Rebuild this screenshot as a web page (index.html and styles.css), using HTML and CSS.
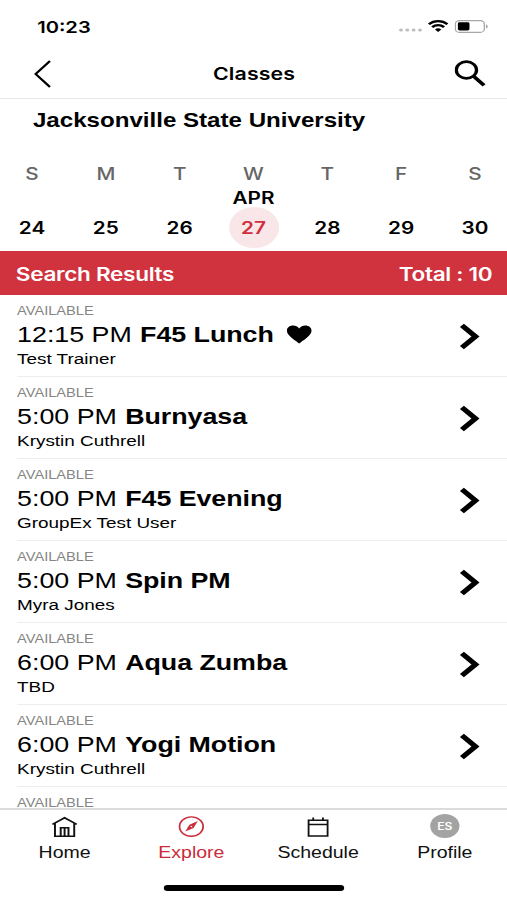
FILE: index.html
```html
<!DOCTYPE html>
<html lang="en">
<head>
<meta charset="utf-8">
<title>Classes</title>
<link rel="stylesheet" href="styles.css">
</head>
<body>
<div class="screen">
  <div class="status">
    <span class="clock">10:23</span>
    <div class="status-icons">
      <svg class="dots" width="20" height="4" viewBox="0 0 20 4" fill="#bdbdbd"><circle cx="2" cy="2" r="1.6"/><circle cx="7.2" cy="2" r="1.6"/><circle cx="12.4" cy="2" r="1.6"/><circle cx="17.6" cy="2" r="1.6"/></svg>
      <svg class="wifi" width="17" height="12" viewBox="0 0 17 12" fill="none" stroke="#000" stroke-width="2.3"><path d="M.9 4.3C5.2.1 11.8.1 16.1 4.3"/><path d="M3.6 7.1c2.8-2.7 7-2.7 9.8 0"/><path d="M8.5 12 5.9 9.4c1.4-1.4 3.8-1.4 5.2 0z" fill="#000" stroke="none"/></svg>
      <svg class="battery" width="28" height="13" viewBox="0 0 28 13"><rect x=".6" y=".6" width="23.8" height="11.8" rx="3.4" fill="none" stroke="#a6a6a6" stroke-width="1.1"/><rect x="2.7" y="2.3" width="9.5" height="8.2" rx="1.4"/><path d="M25.7 4.3c2 .8 2 3.6 0 4.4z" fill="#a6a6a6"/></svg>
    </div>
  </div>
  <header class="nav">
    <svg class="back" width="14" height="28" viewBox="0 0 14 28" fill="none" stroke="#000" stroke-width="1.9"><path d="M13 1 1.2 14 13 27"/></svg>
    <h1>Classes</h1>
    <svg class="search" width="26" height="27" viewBox="0 0 26 27" fill="none" stroke="#000"><circle cx="9.7" cy="10" r="8.3" stroke-width="2.7"/><path d="m15.5 16.2 8.7 9.2" stroke-width="3.3"/></svg>
  </header>
  <h2 class="place">Jacksonville State University</h2>
  <div class="week">
    <div class="day"><span class="dow">S</span><span class="month"></span><span class="date">24</span></div>
    <div class="day"><span class="dow">M</span><span class="month"></span><span class="date">25</span></div>
    <div class="day"><span class="dow">T</span><span class="month"></span><span class="date">26</span></div>
    <div class="day"><span class="dow">W</span><span class="month">APR</span><span class="date selected">27</span></div>
    <div class="day"><span class="dow">T</span><span class="month"></span><span class="date">28</span></div>
    <div class="day"><span class="dow">F</span><span class="month"></span><span class="date">29</span></div>
    <div class="day"><span class="dow">S</span><span class="month"></span><span class="date">30</span></div>
  </div>
  <div class="results"><span>Search Results</span><span class="total">Total : 10</span></div>
  <main class="list">
    <div class="row"><div class="info"><span class="tag">AVAILABLE</span><p class="name">12:15 PM <b>F45 Lunch</b><svg class="heart" width="21" height="19" viewBox="0 0 21 19"><path d="M10.5 18.5C8 16 .4 10.8.4 5.8.4 2.8 2.6.6 5.4.6c2.2 0 4 1.1 5.1 3 1.1-1.9 2.9-3 5.1-3 2.8 0 5 2.2 5 5.2 0 5-7.6 10.2-10.1 12.7z"/></svg></p><p class="trainer">Test Trainer</p></div><svg class="chevron" width="17" height="27" viewBox="0 0 17 27"><path d="m2 2.3 11.2 11.2L2 24.7"/></svg></div>
    <div class="row"><div class="info"><span class="tag">AVAILABLE</span><p class="name">5:00 PM <b>Burnyasa</b></p><p class="trainer">Krystin Cuthrell</p></div><svg class="chevron" width="17" height="27" viewBox="0 0 17 27"><path d="m2 2.3 11.2 11.2L2 24.7"/></svg></div>
    <div class="row"><div class="info"><span class="tag">AVAILABLE</span><p class="name">5:00 PM <b>F45 Evening</b></p><p class="trainer">GroupEx Test User</p></div><svg class="chevron" width="17" height="27" viewBox="0 0 17 27"><path d="m2 2.3 11.2 11.2L2 24.7"/></svg></div>
    <div class="row"><div class="info"><span class="tag">AVAILABLE</span><p class="name">5:00 PM <b>Spin PM</b></p><p class="trainer">Myra Jones</p></div><svg class="chevron" width="17" height="27" viewBox="0 0 17 27"><path d="m2 2.3 11.2 11.2L2 24.7"/></svg></div>
    <div class="row"><div class="info"><span class="tag">AVAILABLE</span><p class="name">6:00 PM <b>Aqua Zumba</b></p><p class="trainer">TBD</p></div><svg class="chevron" width="17" height="27" viewBox="0 0 17 27"><path d="m2 2.3 11.2 11.2L2 24.7"/></svg></div>
    <div class="row"><div class="info"><span class="tag">AVAILABLE</span><p class="name">6:00 PM <b>Yogi Motion</b></p><p class="trainer">Krystin Cuthrell</p></div><svg class="chevron" width="17" height="27" viewBox="0 0 17 27"><path d="m2 2.3 11.2 11.2L2 24.7"/></svg></div>
    <div class="row last"><div class="info"><span class="tag">AVAILABLE</span></div></div>
  </main>
  <nav class="tabs">
    <div class="tab"><svg width="22" height="22" viewBox="0 0 22 22" fill="none" stroke="#111" stroke-width="1.6"><path d="M1 8.4 11 1.8l10 6.6M3.1 7.4v12.8h15.8V7.4M7.8 20.2v-8.4h6.4v8.4M11 12v8"/></svg><span>Home</span></div>
    <div class="tab active"><svg width="22" height="22" viewBox="0 0 22 22" fill="none" stroke="#ca2c39" stroke-width="1.4"><circle cx="11" cy="10.6" r="9.7"/><path d="m6 15.4 3.4-6.6 6.9-3.7-3.5 6.9z" fill="#ca2c39" stroke="none"/><circle cx="11" cy="10.5" r=".8" fill="#fff" stroke="none"/></svg><span>Explore</span></div>
    <div class="tab"><svg width="22" height="22" viewBox="0 0 22 22" fill="none" stroke="#111" stroke-width="1.5"><path d="M3.2 4.2h15.6v15.9H3.2zM3.2 8.5h15.6M7 1.6v3M15 1.6v3"/></svg><span>Schedule</span></div>
    <div class="tab"><i class="avatar">ES</i><span>Profile</span></div>
  </nav>
  <div class="home-bar"></div>
</div>
</body>
</html>
```

FILE: styles.css
```css
* { box-sizing: border-box; margin: 0; padding: 0; }
html, body { width: 507px; height: 900px; overflow: hidden; background: #fff; }
svg { display: block; flex: none; }

/* 416-unit layout, widened to fill the viewport */
.screen {
  width: 416px;
  height: 900px;
  display: flex;
  flex-direction: column;
  transform: scaleX(1.21875);
  transform-origin: 0 0;
  background: #fff;
  color: #000;
  font-family: "Liberation Sans", Arial, sans-serif;
  overflow: hidden;
}

.status { height: 50px; flex: none; display: flex; justify-content: space-between; padding: 0 15.5px 0 30.5px; }
.clock { font: 600 16.5px/20px Inter, sans-serif; margin-top: 17px; }
.status-icons { display: flex; align-items: flex-start; margin-top: 20px; }
.dots { margin-top: 8px; }
.wifi { margin: 0 5px 0 4px; }

.nav { height: 49px; flex: none; display: flex; justify-content: space-between; padding: 0 17px 0 28px; border-bottom: 1.5px solid #e6e6e6; }
.back { margin-top: 10px; }
.nav h1 { font: 600 17.5px/20px Inter, sans-serif; letter-spacing: .1px; margin-top: 14px; margin-left: 2px; }
.search { margin-top: 10px; }

.place { font-size: 19.8px; line-height: 24px; height: 61px; flex: none; padding: 9px 0 0 27px; }

.week { height: 91px; flex: none; display: flex; margin: 0 -4px; font-family: Inter, sans-serif; }
.day { flex: 1; display: flex; flex-direction: column; align-items: center; font-weight: 600; }
.dow { font-size: 17px; line-height: 20px; margin-top: 4px; color: #666; font-weight: 500; }
.month { height: 20px; font-size: 17px; line-height: 20px; margin-top: 4px; }
.date { width: 41px; height: 41px; line-height: 42px; margin-top: -1px; text-align: center; font-size: 17px; border-radius: 50%; }
.date.selected { background: #f9e6e9; color: #cf2f3e; }

.results { height: 44px; flex: none; display: flex; justify-content: space-between; align-items: center; padding: 2px 12px 0 13px; background: #d0323e; color: #fff; font: 600 18.5px/24px Inter, sans-serif; letter-spacing: -.25px; }

.list { flex: 1; min-height: 0; overflow: hidden; }
.row { height: 82px; margin-left: 14px; display: flex; justify-content: space-between; padding-right: 22.5px; border-bottom: 1.5px solid #ededed; }
.row.last { height: 22px; border-bottom: 0; }
.info { padding-top: 9px; }
.tag { display: block; font-size: 12px; line-height: 14px; color: #858585; }
.name { display: flex; align-items: center; font-size: 22px; line-height: 26px; margin-top: 4px; white-space: pre; }
.name b { margin-left: .7px; letter-spacing: -.04px; }
.heart { margin: -2px 0 0 10px; }
.trainer { font-size: 15.5px; line-height: 18px; margin-top: 2px; }
.chevron { margin-top: 27.5px; fill: none; stroke: #000; stroke-width: 4.6; }

.tabs { height: 72px; flex: none; display: flex; border-top: 2px solid #dcdcdc; padding-left: 1px; margin-right: -1px; }
.tab { flex: 1; display: flex; flex-direction: column; align-items: center; font-size: 16px; line-height: 20px; color: #111; padding-top: 5px; }
.tab svg { margin-top: 1px; }
.tab span { margin-top: 5px; }
.tab.active { color: #ca2c39; }
.avatar { width: 24px; height: 24px; border-radius: 50%; background: #a3a3a3; color: #fff; font: 600 10px/24px Inter, sans-serif; text-align: center; margin: -1px 0 0; }

.home-bar { flex: none; width: 148px; height: 6px; border-radius: 3px; background: #000; margin: 5px auto 9px; transform: translateX(.4px); }
```
